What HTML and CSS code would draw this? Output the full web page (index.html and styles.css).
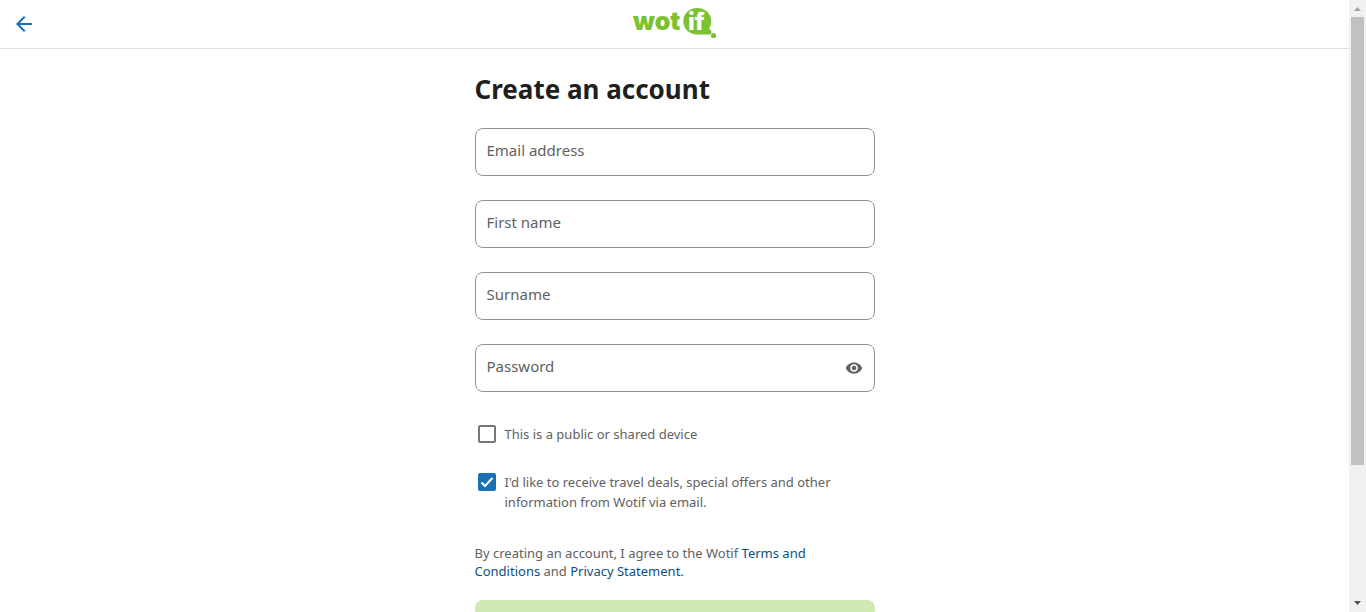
FILE: index.html
```html
<!DOCTYPE html>
<html lang="en-AU">
<head>
<meta charset="utf-8">
<meta name="viewport" content="width=device-width, initial-scale=1">
<title>Create an account</title>
<link rel="stylesheet" href="styles.css">
</head>
<body>
<div class="window">
  <div class="page">
    <header class="topbar">
      <button class="back" type="button" aria-label="Go back">
        <svg width="24" height="24" viewBox="0 0 24 24"><path fill="currentColor" d="M20 11H7.800l5.600-5.600L12 4l-8 8 8 8 1.400-1.400L7.800 13H20z"/></svg>
      </button>
      <a class="logo" href="#" aria-label="Wotif">
        <svg width="84" height="32" viewBox="0 0 84 32">
          <path fill="#7bc230" d="M64.300 0c8 0 14 5.500 14 13.200 0 2.900-.9 5.300-2.300 7.300l1.700 1.500c1.300 1.200 1.100 4.400-1.200 4.400H64.300c-8 0-14-5.500-14-13.200S56.300 0 64.300 0z"/>
          <circle fill="#7bc230" cx="80.500" cy="27.500" r="2.600"/>
          <text class="logo-word" x="0" y="22">wot</text>
          <text class="logo-mark" x="55" y="22">if</text>
        </svg>
      </a>
    </header>
    <main class="content">
      <h1 class="title">Create an account</h1>
      <form class="form">
        <div class="field"><input class="input" type="email" placeholder="Email address" aria-label="Email address"></div>
        <div class="field"><input class="input" type="text" placeholder="First name" aria-label="First name"></div>
        <div class="field"><input class="input" type="text" placeholder="Surname" aria-label="Surname"></div>
        <div class="field">
          <input class="input" type="password" placeholder="Password" aria-label="Password">
          <button class="reveal" type="button" aria-label="Show password">
            <svg width="18" height="18" viewBox="0 0 24 24"><path fill="currentColor" fill-rule="evenodd" d="M12 4.500C7 4.500 2.700 7.600 1 12c1.700 4.400 6 7.500 11 7.500s9.300-3.100 11-7.500c-1.700-4.400-6-7.500-11-7.500zM12 17a5 5 0 1 1 0-10 5 5 0 0 1 0 10zm0-8a3 3 0 1 0 0 6 3 3 0 0 0 0-6z"/></svg>
          </button>
        </div>
        <div class="options">
          <label class="option"><input class="check" type="checkbox"><span>This is a public or shared device</span></label>
          <label class="option">
            <span class="tick-wrap">
              <input class="check" type="checkbox" checked>
              <svg class="tick" width="18" height="18" viewBox="0 0 18 18"><path fill="none" stroke="#fff" stroke-width="2" d="M3.500 9.500l3.500 3.500 7.500-8"/></svg>
            </span>
            <span>I'd like to receive travel deals, special offers and other information from Wotif via email.</span>
          </label>
        </div>
        <p class="terms">By creating an account, I agree to the Wotif <a class="link" href="#">Terms and Conditions</a> and <a class="link" href="#">Privacy Statement.</a></p>
        <button class="submit" type="submit" disabled>Continue</button>
      </form>
    </main>
  </div>
  <div class="scrollbar" aria-hidden="true">
    <svg class="arrow arrow-up" width="17" height="17" viewBox="0 0 17 17"><path d="M5 11h7L8.500 7z"/></svg>
    <div class="thumb"></div>
    <div class="track"></div>
    <svg class="arrow" width="17" height="17" viewBox="0 0 17 17"><path d="M5 6h7l-3.500 4z"/></svg>
  </div>
</div>
</body>
</html>
```
FILE: styles.css
```css
* { box-sizing: border-box; }

body {
  margin: 0;
  background: #fff;
  color: #616161;
  font-family: "Noto Sans", "Open Sans", sans-serif;
}

.window {
  display: flex;
  height: 100vh;
  overflow: hidden;
}

.page {
  flex: 1;
  min-width: 0;
  overflow: hidden;
}

.topbar {
  display: grid;
  grid-template-columns: 1fr auto 1fr;
  align-items: center;
  height: 49px;
  padding: 0 12px;
  border-bottom: 1px solid #dfe0e4;
}

.back,
.reveal {
  display: flex;
  padding: 0;
  border: 0;
  background: none;
}

.back {
  justify-self: start;
  color: #1a70b5;
}

.logo { display: flex; }

.logo svg { overflow: visible; }

.logo-word,
.logo-mark {
  font-family: Inter, sans-serif;
  font-weight: 900;
  font-size: 25px;
  fill: #7bc230;
}

.logo-mark { fill: #fff; font-weight: 800; font-size: 24px; }

.content {
  max-width: 400px;
  margin: 0 auto;
  padding-top: 22px;
}

.title {
  margin: 0 0 21px;
  color: #1f1f1f;
  font-size: 26px;
  line-height: 36px;
  font-weight: 700;
}

.form {
  display: flex;
  flex-direction: column;
  gap: 24px;
}

.field {
  display: flex;
  align-items: center;
  height: 48px;
  padding: 0 11px;
  border: 1px solid #929295;
  border-radius: 8px;
}

.input {
  flex: 1;
  min-width: 0;
  height: 44px;
  padding: 0 0 5px;
  border: 0;
  outline: 0;
  background: none;
  color: #1f1f1f;
  font: 15px/20px "Noto Sans", "Open Sans", sans-serif;
}

.input::placeholder { color: #616161; opacity: 1; }

.reveal { color: #616161; }

.options {
  display: flex;
  flex-direction: column;
  gap: 28px;
  padding: 8px 0 8px 3px;
}

.option {
  display: flex;
  align-items: flex-start;
  gap: 9px;
  font-size: 13px;
  line-height: 20px;
}

.check {
  flex: none;
  appearance: none;
  display: block;
  width: 18px;
  height: 18px;
  margin: 1px 0 0;
  border: 2px solid #767676;
  border-radius: 2px;
}

.check:checked {
  border-color: #1a70b5;
  background: #1a70b5;
}

.tick-wrap {
  position: relative;
  flex: none;
}

.tick {
  position: absolute;
  left: 0;
  bottom: 0;
}

.terms {
  margin: 0;
  font-size: 13px;
  line-height: 18px;
}

.link { color: #0d4f82; text-decoration: none; }

.submit {
  height: 48px;
  margin-top: -4px;
  border: 0;
  border-radius: 8px;
  background: #d1eab4;
  color: #fff;
  font: 700 15px/20px "Noto Sans", sans-serif;
}

.scrollbar {
  display: flex;
  flex-direction: column;
  flex: none;
  width: 17px;
  background: #f1f1f1;
}

.arrow { flex: none; fill: #505050; }
.arrow-up { fill: #a3a3a3; }

.thumb {
  flex: 448;
  margin: 0 2px;
  background: #c1c1c1;
}

.track { flex: 130; }
```
